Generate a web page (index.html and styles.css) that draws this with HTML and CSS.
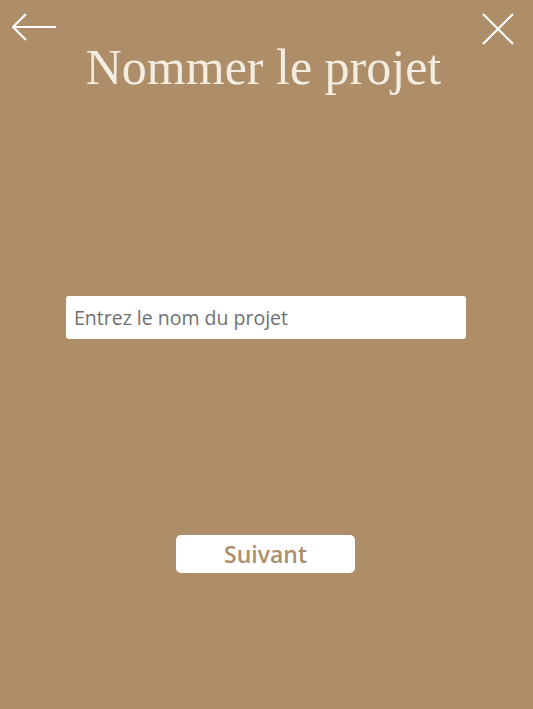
FILE: index.html
```html
<!DOCTYPE html>
<html lang="fr">
<head>
<meta charset="utf-8">
<title>Nommer le projet</title>
<link rel="stylesheet" href="styles.css">
</head>
<body>
<div class="screen">
  <div class="topbar">
    <button class="icon-btn" aria-label="Retour">
      <svg width="46" height="30" viewBox="0 0 46 30"><path d="M14 2 L1 15 L14 28 M1 15 H44" fill="none" stroke="#fff" stroke-width="2.2"/></svg>
    </button>
    <button class="icon-btn" aria-label="Fermer">
      <svg width="34" height="34" viewBox="0 0 34 34"><path d="M2 2 L32 32 M32 2 L2 32" fill="none" stroke="#fff" stroke-width="2.2"/></svg>
    </button>
  </div>
  <h1 class="title">Nommer le projet</h1>
  <div class="field-wrap">
    <input class="name-input" type="text" placeholder="Entrez le nom du projet">
  </div>
  <div class="actions">
    <button class="next-btn">Suivant</button>
  </div>
</div>
</body>
</html>
```
FILE: styles.css
```css
html, body {
  margin: 0;
  padding: 0;
  background: #ad8e68;
}
.screen {
  width: 533px;
  height: 709px;
  display: flex;
  flex-direction: column;
}
.topbar {
  display: flex;
  justify-content: space-between;
  align-items: flex-start;
  padding: 12px 18px 0 12px;
  height: 26px;
}
.icon-btn {
  background: none;
  border: 0;
  padding: 0;
  display: block;
}
.icon-btn svg { display: block; }
.title {
  margin: 0;
  padding-right: 6px;
  text-align: center;
  font-family: "Liberation Serif", serif;
  font-weight: normal;
  font-size: 50px;
  line-height: 58px;
  color: #f3ece1;
}
.field-wrap {
  display: flex;
  padding-left: 66px;
  margin-top: 200px;
}
.name-input {
  box-sizing: border-box;
  width: 400px;
  height: 43px;
  border: 0;
  border-radius: 3px;
  background: #fff;
  padding: 0 8px;
  font-family: "Open Sans", sans-serif;
  font-size: 19.5px;
  color: #333;
  outline: none;
}
.name-input::placeholder { color: #707070; }
.actions {
  display: flex;
  padding-left: 176px;
  margin-top: 196px;
}
.next-btn {
  width: 179px;
  height: 38px;
  border: 0;
  border-radius: 5px;
  background: #fff;
  font-family: "Open Sans", sans-serif;
  font-weight: 600;
  font-size: 23px;
  line-height: 38px;
  color: #ad8e68;
  padding: 0;
}
```
